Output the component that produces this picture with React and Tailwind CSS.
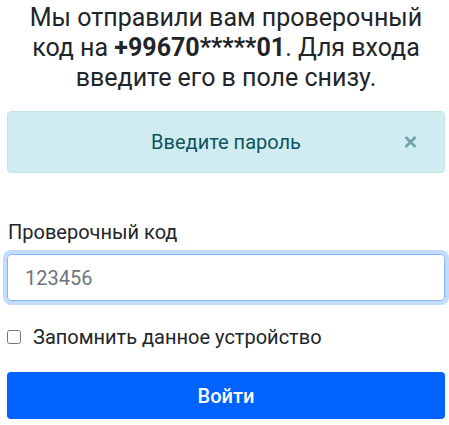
import { useState } from "react";

function App() {
  const [code, setCode] = useState("");
  const [remember, setRemember] = useState(false);

  return (
    <div className="min-h-screen bg-white font-['Roboto',sans-serif] text-[#212529]">
      <div className="ml-[7px] w-[438px] pt-[3px]">
        <h2 className="text-center text-[25px] leading-[30px] px-[16px]">
          Мы отправили вам проверочный код на <b className="font-bold">+99670*****01</b>. Для входа введите его в поле снизу.
        </h2>

        <div className="mt-[18px] h-[62px] rounded-[4px] border border-[#bee5eb] bg-[#d1ecf1] text-[#0c5460] relative flex items-center justify-center">
          <span className="text-[20px]">Введите пароль</span>
          <button className="absolute right-[27px] top-1/2 -translate-y-1/2 text-[#6ea3aa]">
            <svg width="13" height="13" viewBox="0 0 13 13">
              <path d="M1.5 1.5 L11.5 11.5 M11.5 1.5 L1.5 11.5" stroke="currentColor" strokeWidth="2.6" strokeLinecap="butt" />
            </svg>
          </button>
        </div>

        <label className="block mt-[45px] ml-[1px] text-[20px] leading-[28px]">Проверочный код</label>

        <input
          value={code}
          onChange={(e) => setCode(e.target.value)}
          placeholder="123456"
          autoFocus
          className="mt-[8px] block w-full h-[47px] px-[17px] rounded-[4px] border border-[#86b7fe] text-[20px] outline-none shadow-[0_0_0_4px_rgba(13,110,253,0.25)] placeholder:text-[#6c757d]"
        />

        <label className="mt-[22px] flex items-center gap-[12px] text-[20px] leading-[28px]">
          <input
            type="checkbox"
            checked={remember}
            onChange={(e) => setRemember(e.target.checked)}
            className="w-[14px] h-[14px] m-0"
          />
          Запомнить данное устройство
        </label>

        <button className="mt-[21px] w-full h-[47px] rounded-[4px] bg-[#0062ff] text-white text-[20px] font-medium">
          Войти
        </button>
      </div>
    </div>
  );
}

export default App;
